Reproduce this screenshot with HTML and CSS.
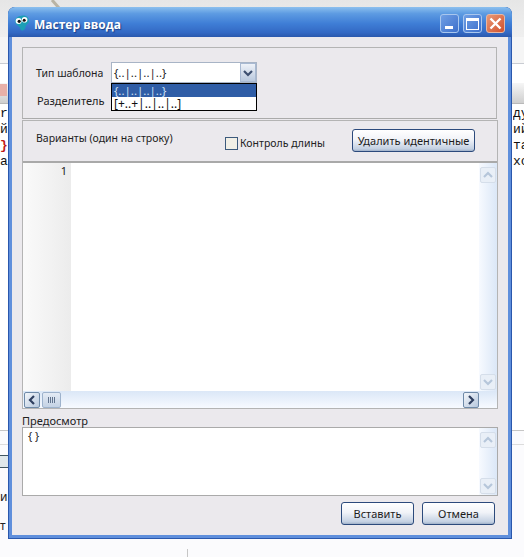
FILE: index.html
```html
<!DOCTYPE html>
<html lang="en">
<head>
<meta charset="UTF-8" />
<title>Мастер ввода</title>
<link rel="stylesheet" href="styles.css">
</head>
<body>

  <svg width="0" height="0" class="defs">
    <symbol id="chev-up" viewBox="0 0 10 8"><path d="M1 6 L5 2 L9 6" fill="none" stroke-width="2.2"/></symbol>
    <symbol id="chev-down" viewBox="0 0 10 8"><path d="M1 2 L5 6 L9 2" fill="none" stroke-width="2.2"/></symbol>
    <symbol id="chev-left" viewBox="0 0 8 10"><path d="M6 1 L2 5 L6 9" fill="none" stroke-width="2.2"/></symbol>
    <symbol id="chev-right" viewBox="0 0 8 10"><path d="M2 1 L6 5 L2 9" fill="none" stroke-width="2.2"/></symbol>
  </svg>

  <!-- Editor behind the dialog -->
  <div class="backdrop">
    <div class="bg-toolbar">
      <svg class="bg-pencil" width="20" height="8" viewBox="0 0 20 8"><path d="M3 0 L10 8" stroke="#b9b4a4" stroke-width="3"/></svg>
    </div>
    <div class="bg-strip"></div>
    <div class="bg-tabs"></div>
    <div class="bg-tabs-low"><span class="bg-close"></span></div>
    <div class="bg-code">
      <div class="bg-line"><span>r</span><span class="bg-right">ду</span></div>
      <div class="bg-line"><span>й</span><span class="bg-right">ий</span></div>
      <div class="bg-line"><span class="bg-red">}</span><span class="bg-right">та</span></div>
      <div class="bg-line"><span>а</span><span class="bg-right">хо</span></div>
    </div>
    <div class="bg-lower">
      <div class="bg-rule"></div>
      <div class="bg-rule-left"></div>
      <div class="bg-check"></div>
      <div class="bg-letter bg-letter-first">и</div>
      <div class="bg-letter">т</div>
      <span class="bg-mark"></span>
    </div>
  </div>

  <!-- Dialog -->
  <div class="window">
    <div class="titlebar">
      <svg class="app-icon" width="16" height="17" viewBox="0 0 16 17">
        <path d="M6 1 C10 -0.5 15 1 15 6 C15 9 12 9 11.5 12 C11 16 7 17 6 13 C5.5 11 1 10 1 6 C1 3.5 3 2 6 1 Z" fill="#1c9fb6"/>
        <circle cx="4.6" cy="6" r="3" fill="#fff"/>
        <circle cx="10.6" cy="4.8" r="2.8" fill="#fff"/>
        <circle cx="5.2" cy="6.3" r="1.6" fill="#111"/>
        <circle cx="10.2" cy="5.2" r="1.5" fill="#111"/>
      </svg>
      <span class="title-text">Мастер ввода</span>
      <div class="win-buttons">
        <div class="win-btn"><span class="glyph-min"></span></div>
        <div class="win-btn"><span class="glyph-max"></span></div>
        <div class="win-btn win-close">
          <svg width="13" height="13" viewBox="0 0 13 13"><path d="M1.5 1.5 L11.5 11.5 M11.5 1.5 L1.5 11.5" stroke="#fff" stroke-width="2.4"/></svg>
        </div>
      </div>
    </div>

    <div class="client">
      <div class="group template-group">
        <div class="field-row">
          <span class="field-label">Тип шаблона</span>
          <div class="combo">
            <span class="combo-value">{..|..|..|..}</span>
            <span class="combo-arrow"><svg width="10" height="8"><use href="#chev-down" stroke="#3d4f70"/></svg></span>
            <div class="combo-list">
              <div class="combo-item selected">{..|..|..|..}</div>
              <div class="combo-item">[+..+|..|..|..]</div>
            </div>
          </div>
        </div>
        <div class="field-row second">
          <span class="field-label">Разделитель</span>
        </div>
      </div>

      <div class="variants">
        <div class="variants-head">
          <span class="variants-label">Варианты (один на строку)</span>
          <label class="check"><span class="check-box"></span>Контроль длины</label>
          <button class="btn btn-remove">Удалить идентичные</button>
        </div>
        <div class="editor">
          <div class="editor-main">
            <div class="gutter">1</div>
            <div class="editor-text"></div>
            <div class="vscroll">
              <span class="sb-btn"><svg width="10" height="8"><use href="#chev-up" stroke="#b6c6da"/></svg></span>
              <span class="sb-btn"><svg width="10" height="8"><use href="#chev-down" stroke="#b6c6da"/></svg></span>
            </div>
          </div>
          <div class="hscroll">
            <span class="sb-btn sb-dark"><svg width="8" height="10"><use href="#chev-left" stroke="#2f3f60"/></svg></span>
            <span class="sb-thumb"><i></i><i></i><i></i><i></i></span>
            <span class="sb-btn sb-dark sb-end"><svg width="8" height="10"><use href="#chev-right" stroke="#2f3f60"/></svg></span>
          </div>
        </div>
      </div>

      <div class="preview-label">Предосмотр</div>
      <div class="preview">
        <div class="preview-text">{ }</div>
        <div class="vscroll">
          <span class="sb-btn"><svg width="10" height="8"><use href="#chev-up" stroke="#b6c6da"/></svg></span>
          <span class="sb-btn"><svg width="10" height="8"><use href="#chev-down" stroke="#b6c6da"/></svg></span>
        </div>
      </div>

      <div class="actions">
        <button class="btn btn-action">Вставить</button>
        <button class="btn btn-action">Отмена</button>
      </div>
    </div>
  </div>

</body>
</html>
```

FILE: styles.css
```css
html, body {
  margin: 0;
  height: 557px;
  overflow: hidden;
}

body {
  font-family: "Noto Sans", sans-serif;
  font-size: 10.5px;
  color: #222;
  background: #fbfbfd;
  position: relative;
}

.defs {
  display: block;
  height: 0;
}

/* Editor behind the dialog */
.backdrop {
  display: flex;
  flex-direction: column;
  height: 557px;
}

.bg-toolbar {
  height: 37px;
  background: linear-gradient(#e6e6e6, #efefef);
  position: relative;
}

.bg-pencil {
  position: absolute;
  left: 49px;
  top: 0;
}

.bg-strip {
  height: 26px;
  background: #f5f5f5;
}

.bg-tabs {
  height: 19px;
  background: #fff;
  border-top: 1px solid #c9ccd2;
}

.bg-tabs-low {
  height: 20px;
  background: linear-gradient(#f6f6f6, #cfcfcf);
  border-bottom: 1px solid #b9b9b9;
  position: relative;
}

.bg-close {
  position: absolute;
  left: 0;
  top: 1px;
  width: 7px;
  height: 12px;
  background: #e8b0a8;
}

.bg-code {
  background: #fff;
  padding-top: 2px;
  height: 326px;
  box-sizing: border-box;
  font-family: "Liberation Mono", monospace;
  font-size: 13px;
}

.bg-line {
  display: flex;
  justify-content: space-between;
  height: 16px;
  line-height: 16px;
  color: #111;
}

.bg-right {
  width: 11px;
  overflow: hidden;
  white-space: nowrap;
}

.bg-red {
  color: #c01818;
  font-weight: bold;
}

.bg-lower {
  background: #fbfbfd;
  flex: 1;
  position: relative;
}

.bg-rule {
  border-top: 1px solid #c6c6c6;
  margin-bottom: 13px;
}

.bg-rule-left {
  border-top: 1px solid #dcdcdc;
  margin-bottom: 10px;
}

.bg-check {
  width: 8px;
  height: 11px;
  background: #dfe7ea;
  border: 1px solid #3f5560;
  margin: 0 0 22px -1px;
}

.bg-letter {
  font-size: 12px;
  line-height: 14px;
  color: #222;
}

.bg-letter-first {
  margin-bottom: 15px;
}

.bg-mark {
  position: absolute;
  left: 187px;
  bottom: 0;
  width: 1px;
  height: 8px;
  background: #c6c6c6;
}

/* Dialog */
.window {
  position: absolute;
  left: 8px;
  top: 7px;
  width: 504px;
  height: 532px;
  box-sizing: border-box;
  display: flex;
  flex-direction: column;
  border-radius: 7px 7px 0 0;
  background: #2a58ad;
  padding: 0 4px 4px;
  box-shadow: inset 2px 0 0 #2a58ad, inset -2px 0 0 #2a58ad;
}

.window::before {
  content: "";
  position: absolute;
  left: 1px;
  right: 1px;
  top: 28px;
  bottom: 1px;
  background: #5f8fdc;
}

.titlebar {
  height: 30px;
  margin: 0 -4px;
  padding: 0 7px 0 6px;
  display: flex;
  align-items: center;
  border-radius: 7px 7px 0 0;
  background: linear-gradient(#8cc0ee 0%, #5d9be2 22%, #3f7ed6 55%, #3369c4 85%, #2a58ad 100%);
  position: relative;
}

.app-icon {
  flex: none;
  margin: 2px 4px 0 0;
}

.title-text {
  font-family: "Open Sans", sans-serif;
  font-size: 12px;
  font-weight: bold;
  color: #fff;
  padding-top: 4px;
  text-shadow: 1px 1px 1px #1d3f86;
}

.win-buttons {
  margin-left: auto;
  display: flex;
  gap: 4px;
  padding-top: 3px;
}

.win-btn {
  width: 19px;
  height: 19px;
  box-sizing: border-box;
  border: 1px solid #a9c7ee;
  border-radius: 3px;
  background: linear-gradient(135deg, #6f9fe4, #3d70cc);
  display: flex;
  align-items: center;
  justify-content: center;
  position: relative;
}

.glyph-min {
  position: absolute;
  left: 4px;
  bottom: 3px;
  width: 8px;
  height: 3px;
  background: #fff;
}

.glyph-max {
  width: 11px;
  height: 8px;
  border: 1px solid #fff;
  border-top-width: 3px;
}

.win-close {
  background: linear-gradient(135deg, #e89a78, #d2502c);
  border-color: #e6b7a4;
}

.client {
  flex: 1;
  min-height: 0;
  position: relative;
  background: #ebe9ed;
  padding: 10px 10px 0;
}

.group {
  box-sizing: border-box;
  border: 1px solid #b4b4b4;
  border-bottom-color: #aaa;
}

.template-group {
  width: 475px;
  height: 72px;
  padding-top: 14px;
}

.field-row {
  display: flex;
  align-items: center;
  height: 21px;
}

.field-row .field-label {
  width: 75px;
  padding-left: 13px;
}

.field-row.second {
  margin-top: 6px;
}

.field-row.second .field-label {
  padding-left: 14px;
  position: relative;
  top: 1px;
  font-size: 11px;
}

.combo {
  width: 146px;
  height: 21px;
  box-sizing: border-box;
  border: 1px solid #a8b4c6;
  background: #fff;
  display: flex;
  align-items: center;
  position: relative;
}

.combo-value {
  padding-left: 2px;
  font-size: 11.5px;
}

.combo-arrow {
  margin-left: auto;
  width: 16px;
  height: 19px;
  background: linear-gradient(#eef2f8, #b9c8de);
  border: 1px solid #a8b9d2;
  box-sizing: border-box;
  display: flex;
  align-items: center;
  justify-content: center;
}

.combo-list {
  position: absolute;
  left: -1px;
  top: 20px;
  width: 146px;
  box-sizing: border-box;
  border: 1px solid #000;
  background: #fff;
  z-index: 2;
}

.combo-item {
  height: 13px;
  line-height: 13px;
  font-size: 12px;
  padding-left: 2px;
  color: #111;
  overflow: hidden;
}

.combo-item.selected {
  background: #2f5da6;
  color: #cfe0f4;
  font-size: 11.5px;
}

.variants {
  width: 476px;
  height: 289px;
  box-sizing: border-box;
  margin-top: 1px;
  border: 1px solid #b4b4b4;
  display: flex;
  flex-direction: column;
}

.variants-head {
  height: 40px;
  flex: none;
  display: flex;
  align-items: flex-start;
}

.variants-label {
  width: 189px;
  padding: 10px 0 0 13px;
  box-sizing: content-box;
  line-height: 15px;
}

.check {
  display: flex;
  align-items: center;
  gap: 2px;
  width: 127px;
  padding-top: 15px;
}

.check-box {
  width: 13px;
  height: 13px;
  box-sizing: border-box;
  border: 1px solid #3c5a7c;
  background: #f1efe6;
}

.btn {
  font-family: inherit;
  font-size: 11px;
  color: #1c1c1c;
  padding: 0;
  box-sizing: border-box;
  border: 1px solid #2c4a7c;
  border-radius: 3px;
  background: linear-gradient(#fff 0%, #f1f3f8 45%, #c3d0e2 90%, #9fb0c8 100%);
}

.btn-remove {
  width: 123px;
  height: 23px;
  margin-top: 8px;
}

.editor {
  flex: 1;
  min-height: 0;
  display: flex;
  flex-direction: column;
  border-top: 2px solid #a9a9a9;
  background: #fff;
}

.editor-main {
  flex: 1;
  min-height: 0;
  display: flex;
}

.gutter {
  width: 44px;
  flex: none;
  text-align: right;
  padding: 0 4px 0 0;
  margin-right: 1px;
  background: linear-gradient(90deg, #fafafa, #ececec);
  line-height: 15px;
  font-size: 11px;
  color: #222;
}

.editor-text {
  flex: 1;
}

.vscroll {
  width: 18px;
  flex: none;
  box-sizing: border-box;
  padding: 4px 1px 1px;
  display: flex;
  flex-direction: column;
  justify-content: space-between;
  background: linear-gradient(90deg, #f7faff, #dbe7f7);
}

.sb-btn {
  width: 16px;
  height: 16px;
  box-sizing: border-box;
  flex: none;
  display: flex;
  align-items: center;
  justify-content: center;
  border: 1px solid #d5deea;
  border-radius: 2px;
  background: #e9eff7;
}

.hscroll {
  height: 17px;
  flex: none;
  display: flex;
  align-items: center;
  gap: 2px;
  padding: 0 18px 0 1px;
  background: linear-gradient(#dbe7f7, #f7faff);
}

.sb-dark {
  border-color: #6f8aa8;
  background: linear-gradient(135deg, #f3f6fa, #b7c8de);
}

.sb-end {
  margin-left: auto;
}

.sb-thumb {
  width: 19px;
  height: 16px;
  box-sizing: border-box;
  display: flex;
  align-items: center;
  justify-content: center;
  gap: 1px;
  border: 1px solid #9db2cc;
  border-radius: 2px;
  background: linear-gradient(#e4ebf5, #c4d2e4);
}

.sb-thumb i {
  width: 1px;
  height: 6px;
  background: #62748e;
}

.preview-label {
  height: 18px;
  line-height: 24px;
  font-size: 11px;
}

.preview {
  width: 476px;
  height: 69px;
  box-sizing: border-box;
  border: 1px solid #aaa;
  background: #fff;
  display: flex;
}

.preview-text {
  flex: 1;
  padding: 1px 0 0 5px;
  font-size: 11px;
  line-height: 14px;
}

.actions {
  display: flex;
  justify-content: flex-end;
  gap: 8px;
  width: 473px;
  margin-top: 6px;
}

.btn-action {
  width: 73px;
  height: 23px;
}
```
